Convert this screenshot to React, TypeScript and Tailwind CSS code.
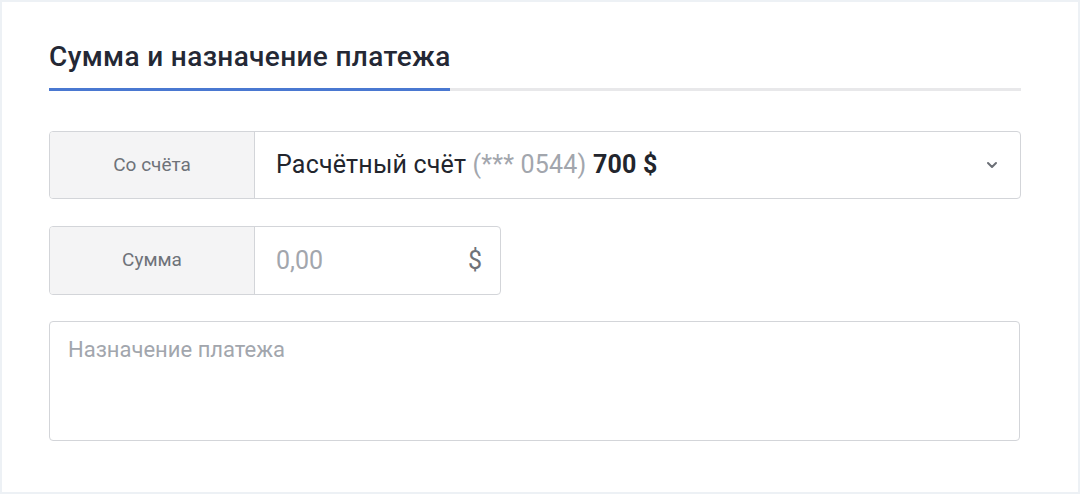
import React from "react";

export default function App() {
  return (
    <div className="w-[1080px] h-[494px] bg-[#edf1f5] p-[2px]" style={{ fontFamily: "Roboto, 'Noto Sans', sans-serif" }}>
      <div className="w-full h-full bg-white pl-[47px] pr-[57px] pt-[39px]">
        <div>
          <h2 className="text-[28px] leading-[32px] font-medium text-[#242835] tracking-[0.35px]">Сумма и назначение платежа</h2>
          <div className="mt-[15px] h-[3px] bg-[#e8e8ea]">
            <div className="h-[3px] w-[401px] bg-[#4a78d1]" />
          </div>
        </div>

        <div className="mt-[40px] flex h-[68px] rounded-[4px] border border-[#d3d5d9] overflow-hidden">
          <div className="w-[205px] shrink-0 bg-[#f4f4f5] border-r border-[#d3d5d9] flex items-center justify-center text-[19px] text-[#6e7279]">
            Со счёта
          </div>
          <div className="flex-1 flex items-center pl-[21px] pr-[22px]">
            <span className="text-[25px] text-[#22252d] tracking-[0.2px]">
              Расчётный счёт <span className="text-[#a2a6ad]">(*** 0544)</span> <span className="font-bold">700 $</span>
            </span>
            <svg className="ml-auto" width="12" height="8" viewBox="0 0 12 8" fill="none">
              <path d="M2 2l4 4 4-4" stroke="#6b6f76" strokeWidth="2" strokeLinecap="round" strokeLinejoin="round" />
            </svg>
          </div>
        </div>

        <div className="mt-[27px] flex h-[69px] w-[452px] rounded-[4px] border border-[#d3d5d9] overflow-hidden">
          <div className="w-[205px] shrink-0 bg-[#f4f4f5] border-r border-[#d3d5d9] flex items-center justify-center text-[19px] text-[#6e7279]">
            Сумма
          </div>
          <div className="flex-1 flex items-center pl-[21px] pr-[18px] text-[25px] text-[#a2a6ad]">
            <span>0,00</span>
            <span className="ml-auto text-[#6e7279]">$</span>
          </div>
        </div>

        <div className="mt-[26px] h-[120px] w-[971px] rounded-[4px] border border-[#d3d5d9] px-[18px] pt-[14px] text-[22px] leading-[28px] text-[#a2a6ad]">
          Назначение платежа
        </div>
      </div>
    </div>
  );
}
